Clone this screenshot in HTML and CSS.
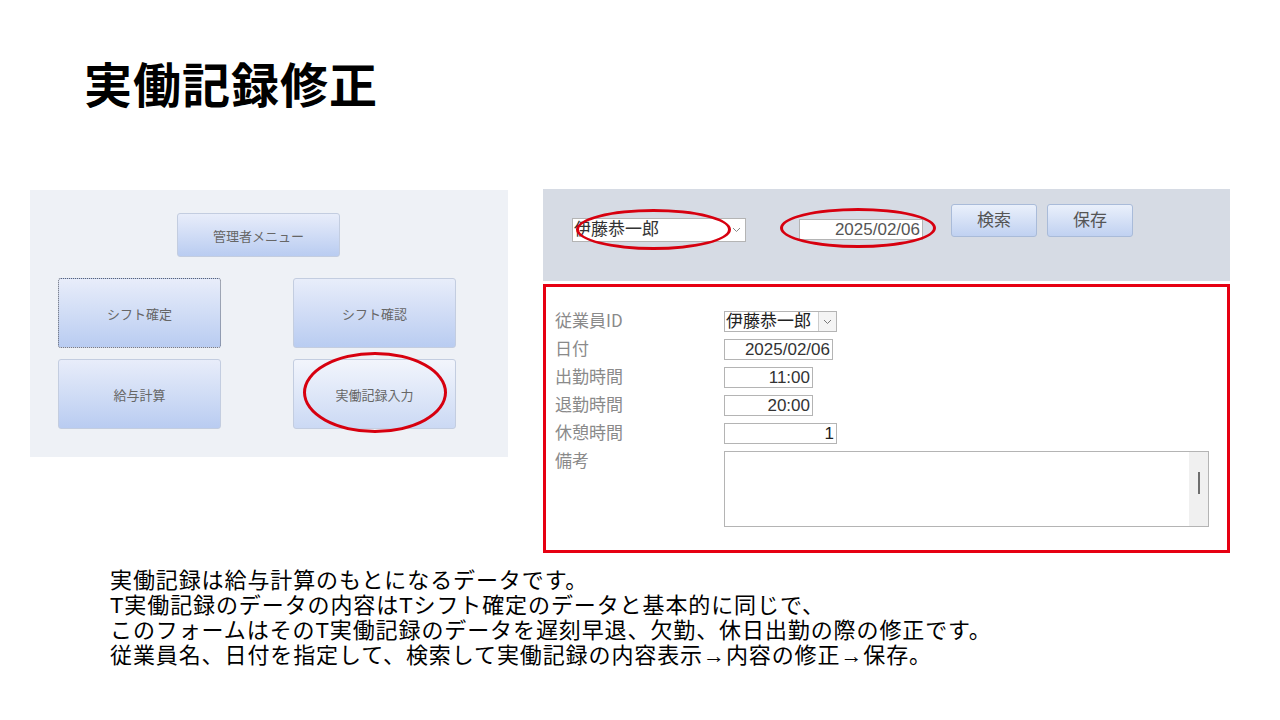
FILE: index.html
```html
<!DOCTYPE html>
<html lang="ja">
<head>
    <meta charset="UTF-8">
    <title>実働記録修正</title>
    <link rel="stylesheet" href="styles.css">
</head>
<body>
    <h1 class="title">実働記録修正</h1>

    <div class="shots">
        <!-- 管理者メニュー画面 -->
        <div class="menu-panel">
            <button class="menu-btn menu-top">管理者メニュー</button>
            <div class="menu-grid">
                <button class="menu-btn focused">シフト確定</button>
                <button class="menu-btn">シフト確認</button>
                <button class="menu-btn">給与計算</button>
                <button class="menu-btn hover">実働記録入力<span class="mark mark-menu"></span></button>
            </div>
        </div>

        <!-- 実働記録入力フォーム -->
        <div class="form-col">
            <div class="search-bar">
                <div class="combo combo-top">
                    <span class="combo-text">伊藤恭一郎</span>
                    <span class="combo-arrow">
                        <svg width="9" height="6" viewBox="0 0 9 6"><path d="M1 1 L4.5 4.5 L8 1" fill="none" stroke="#888" stroke-width="1"/></svg>
                    </span>
                    <span class="mark mark-name"></span>
                </div>
                <div class="field date-top">2025/02/06<span class="mark mark-date"></span></div>
                <button class="tool-btn search-btn">検索</button>
                <button class="tool-btn">保存</button>
            </div>

            <div class="record-box">
                <div class="row">
                    <span class="label">従業員ID</span>
                    <div class="combo combo-form">
                        <span class="combo-text">伊藤恭一郎</span>
                        <span class="combo-btn">
                            <svg width="9" height="6" viewBox="0 0 9 6"><path d="M1 1 L4.5 4.5 L8 1" fill="none" stroke="#777" stroke-width="1"/></svg>
                        </span>
                    </div>
                </div>
                <div class="row">
                    <span class="label">日付</span>
                    <div class="field w-date">2025/02/06</div>
                </div>
                <div class="row">
                    <span class="label">出勤時間</span>
                    <div class="field w-time">11:00</div>
                </div>
                <div class="row">
                    <span class="label">退勤時間</span>
                    <div class="field w-time">20:00</div>
                </div>
                <div class="row">
                    <span class="label">休憩時間</span>
                    <div class="field w-break">1</div>
                </div>
                <div class="row row-memo">
                    <span class="label">備考</span>
                    <div class="memo">
                        <div class="memo-text"></div>
                        <div class="memo-scroll"><span class="thumb"></span></div>
                    </div>
                </div>
            </div>
        </div>
    </div>

    <div class="notes">
        <p>実働記録は給与計算のもとになるデータです。</p>
        <p>T実働記録のデータの内容はTシフト確定のデータと基本的に同じで、</p>
        <p>このフォームはそのT実働記録のデータを遅刻早退、欠勤、休日出勤の際の修正です。</p>
        <p>従業員名、日付を指定して、検索して実働記録の内容表示→内容の修正→保存。</p>
    </div>
</body>
</html>
```

FILE: styles.css
```css
body {
    margin: 0;
    width: 1280px;
    height: 720px;
    background: #fff;
    font-family: "Liberation Sans", "Noto Sans CJK JP", sans-serif;
    color: #000;
    overflow: hidden;
}

.title {
    margin: 0;
    padding: 52px 0 0 84px;
    font-size: 48px;
    line-height: 60px;
    font-weight: bold;
    letter-spacing: 1px;
    font-family: "Noto Sans CJK JP", sans-serif;
}

.shots {
    display: flex;
    align-items: flex-start;
    margin-top: 77px;
}

/* 左：メニュー画面 */
.menu-panel {
    margin: 1px 0 0 30px;
    width: 478px;
    height: 267px;
    box-sizing: border-box;
    padding: 23px 0 0 28px;
    background: #eef1f6;
}

.menu-btn {
    position: relative;
    display: block;
    width: 163px;
    height: 70px;
    padding: 0;
    border: 1px solid #c3cde0;
    border-radius: 3px;
    background: linear-gradient(#e8edfa, #b9ccf1);
    color: #666;
    font-family: "Noto Sans CJK JP", sans-serif;
    font-size: 13px;
}

.menu-top {
    height: 44px;
    margin-left: 119px;
    margin-bottom: 21px;
}

.menu-btn.focused {
    border: 1px dotted #5f6470;
}

.menu-btn.hover {
    background: linear-gradient(#f2f5fc, #cbd9f4);
}

.menu-grid {
    display: grid;
    grid-template-columns: 163px 163px;
    grid-auto-rows: 70px;
    column-gap: 72px;
    row-gap: 11px;
}

/* 赤丸 */
.mark {
    position: absolute;
    box-sizing: border-box;
    border: 3px solid #d7000f;
    border-radius: 50%;
    pointer-events: none;
}

.mark-menu {
    left: 9px;
    top: -8px;
    width: 144px;
    height: 81px;
}

.mark-name {
    left: 3px;
    top: -10px;
    width: 155px;
    height: 41px;
}

.mark-date {
    left: -20px;
    top: -12px;
    width: 156px;
    height: 40px;
}

/* 右：フォーム */
.form-col {
    margin-left: 35px;
    width: 687px;
}

.search-bar {
    display: flex;
    align-items: flex-start;
    height: 92px;
    background: #d6dbe4;
    font-size: 17px;
}

.combo {
    position: relative;
    display: flex;
    box-sizing: border-box;
    background: #fff;
    border: 1px solid #b4b4b4;
    color: #333;
}

.combo-top {
    margin: 29px 0 0 29px;
    width: 174px;
    height: 24px;
    line-height: 22px;
}

.combo-text {
    flex: 1;
    padding-left: 1px;
    white-space: nowrap;
    overflow: hidden;
}

.combo-arrow {
    width: 17px;
    display: flex;
    align-items: center;
    justify-content: center;
}

.field {
    position: relative;
    box-sizing: border-box;
    background: #fff;
    border: 1px solid #b4b4b4;
    color: #333;
    text-align: right;
    padding-right: 2px;
    height: 21px;
    line-height: 19px;
    font-size: 17px;
}

.date-top {
    margin: 30px 0 0 53px;
    width: 124px;
    color: #555;
}

.tool-btn {
    margin: 15px 0 0 10px;
    width: 86px;
    height: 33px;
    padding: 0 0 4px;
    border: 1px solid #a9bbd9;
    border-radius: 3px;
    background: linear-gradient(#eaf0fb, #c0d1f1);
    color: #555;
    font-family: "Noto Sans CJK JP", sans-serif;
    font-size: 17px;
}

.search-btn {
    margin-left: 28px;
}

.record-box {
    margin-top: 3px;
    height: 269px;
    box-sizing: border-box;
    border: 3px solid #e60012;
    padding: 23px 0 0 9px;
}

.row {
    display: flex;
    align-items: flex-start;
    height: 28px;
    font-size: 17px;
}

.label {
    width: 169px;
    color: #8a8a8a;
    line-height: 20px;
    font-family: "Noto Sans CJK JP", sans-serif;
}

.row .field,
.row .combo {
    margin-top: 1px;
}

.combo-form {
    width: 113px;
    height: 21px;
    line-height: 19px;
}

.combo-form .combo-text {
    color: #222;
}

.combo-btn {
    width: 17px;
    display: flex;
    align-items: center;
    justify-content: center;
    border-left: 1px solid #ccc;
    background: #f4f4f4;
}

.w-date {
    width: 109px;
}

.w-time {
    width: 89px;
}

.w-break {
    width: 113px;
    color: #222;
}

.row-memo {
    height: auto;
}

.memo {
    display: flex;
    margin-top: 1px;
    width: 485px;
    height: 76px;
    box-sizing: border-box;
    border: 1px solid #b4b4b4;
    background: #fff;
}

.memo-text {
    flex: 1;
}

.memo-scroll {
    width: 19px;
    background: #f0f0f0;
    display: flex;
    justify-content: center;
    align-items: flex-start;
}

.thumb {
    display: block;
    width: 2px;
    height: 22px;
    margin-top: 20px;
    background: #6e6e6e;
}

/* 説明文 */
.notes {
    margin-top: 15px;
    padding-left: 110px;
    font-size: 22px;
    line-height: 25px;
    letter-spacing: 0.9px;
}

.notes p {
    margin: 0;
}
```
